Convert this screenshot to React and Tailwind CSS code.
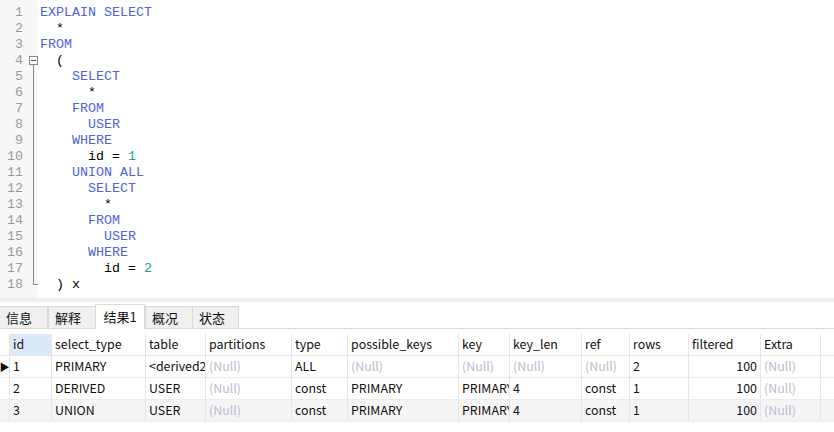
import React from 'react';

const K = 'text-[#4f63e0]';
const N = 'text-[#1aa57a]';

const codeLines = [
  [['EXPLAIN SELECT', K]],
  [['  *', '']],
  [['FROM', K]],
  [['  (', '']],
  [['    SELECT', K]],
  [['      *', '']],
  [['    FROM', K]],
  [['      USER', K]],
  [['    WHERE', K]],
  [['      id = ', ''], ['1', N]],
  [['    UNION ALL', K]],
  [['      SELECT', K]],
  [['        *', '']],
  [['      FROM', K]],
  [['        USER', K]],
  [['      WHERE', K]],
  [['        id = ', ''], ['2', N]],
  [['  ) x', '']],
];

const cols = [
  { key: 'id', w: 'w-[42px]' },
  { key: 'select_type', w: 'w-[94px]' },
  { key: 'table', w: 'w-[60px]' },
  { key: 'partitions', w: 'w-[86px]' },
  { key: 'type', w: 'w-[56px]' },
  { key: 'possible_keys', w: 'w-[111px]' },
  { key: 'key', w: 'w-[51px]' },
  { key: 'key_len', w: 'w-[72px]' },
  { key: 'ref', w: 'w-[48px]' },
  { key: 'rows', w: 'w-[59px]' },
  { key: 'filtered', w: 'w-[72px]', right: true },
  { key: 'Extra', w: 'w-[60px]' },
];

const NULL = null;
const rows = [
  ['1', 'PRIMARY', '<derived2>', NULL, 'ALL', NULL, NULL, NULL, NULL, '2', '100', NULL],
  ['2', 'DERIVED', 'USER', NULL, 'const', 'PRIMARY', 'PRIMARY', '4', 'const', '1', '100', NULL],
  ['3', 'UNION', 'USER', NULL, 'const', 'PRIMARY', 'PRIMARY', '4', 'const', '1', '100', NULL],
];

const tabs = ['信息', '解释', '结果1', '概况', '状态'];

function Editor() {
  return (
    <div className="flex h-[298px]">
      <div className="relative w-[37px] bg-[#f7f7f7] pt-[5px] text-[#9a9a9a]">
        {codeLines.map((_, i) => (
          <div key={i} className="h-[16px] w-[23px] text-right leading-[16px]">{i + 1}</div>
        ))}
        <div className="absolute left-[29px] top-[56px] flex h-[9px] w-[9px] items-center justify-center border border-[#8a8a8a] bg-white">
          <div className="h-px w-[5px] bg-[#555]" />
        </div>
        <div className="absolute left-[33px] top-[65px] h-[219px] w-px bg-[#8a8a8a]" />
        <div className="absolute left-[33px] top-[284px] h-px w-[5px] bg-[#8a8a8a]" />
      </div>
      <div className="pl-[3px] pt-[5px] text-black">
        {codeLines.map((toks, i) => (
          <div key={i} className="h-[16px] whitespace-pre leading-[16px]">
            {toks.map(([t, c], j) => (
              <span key={j} className={c}>{t}</span>
            ))}
          </div>
        ))}
      </div>
    </div>
  );
}

function Tabs() {
  return (
    <div className="flex h-[27px] items-end border-b border-[#d9d9d9]">
      {tabs.map((t, i) =>
        i === 2 ? (
          <div key={t} className="-mb-px flex h-[25px] w-[50px] items-start justify-center border border-b-0 border-[#d9d9d9] bg-white pt-[2px] text-[13px]">
            {t}
          </div>
        ) : (
          <div key={t} className={`flex h-[22px] items-center border border-b-0 border-[#d9d9d9] bg-[#f0f0f0] pl-[6px] text-[13px] ${i === 0 ? 'w-[48px] border-l-0' : 'w-[47px]'} ${i === 1 || i === 3 ? 'border-r-0' : ''}`}>
            {t}
          </div>
        )
      )}
    </div>
  );
}

function Grid() {
  return (
    <div className="pt-[5px] text-[12.4px]">
      <div className="flex h-[22px] border-b border-[#e6e6e6]">
        <div className="w-[10px] border-r border-[#e6e6e6]" />
        {cols.map((c, i) => (
          <div key={c.key} className={`${c.w} flex items-center border-r border-[#e6e6e6] pl-[3px] ${i === 0 ? 'bg-[#dbe9f8]' : ''}`}>
            {c.key}
          </div>
        ))}
      </div>
      {rows.map((r, ri) => (
        <div key={ri} className={`flex h-[22px] border-b border-[#ececec] ${ri === 2 ? 'bg-[#f5f5f5]' : 'bg-white'}`}>
          <div className="flex w-[10px] items-center justify-center border-r border-[#e6e6e6] text-[10px] leading-none">
            {ri === 0 ? '▶' : ''}
          </div>
          {cols.map((c, ci) => (
            <div key={c.key} className={`${c.w} flex items-center overflow-hidden whitespace-nowrap border-r border-[#e6e6e6] ${c.right ? 'justify-end pr-[3px]' : 'pl-[3px]'}`}>
              {r[ci] === null ? <span className="text-[#b9bdd0]">(Null)</span> : r[ci]}
            </div>
          ))}
        </div>
      ))}
    </div>
  );
}

export default function App() {
  return (
    <div className="h-[432px] w-[834px] overflow-hidden bg-white">
      <div className="font-['Liberation_Mono',monospace] text-[13.33px]">
        <Editor />
      </div>
      <div className="h-[4px] bg-[#efefef]" />
      <div className="font-['Noto_Sans_CJK_SC','Noto_Sans',sans-serif] text-[#111]">
        <Tabs />
        <Grid />
      </div>
    </div>
  );
}
